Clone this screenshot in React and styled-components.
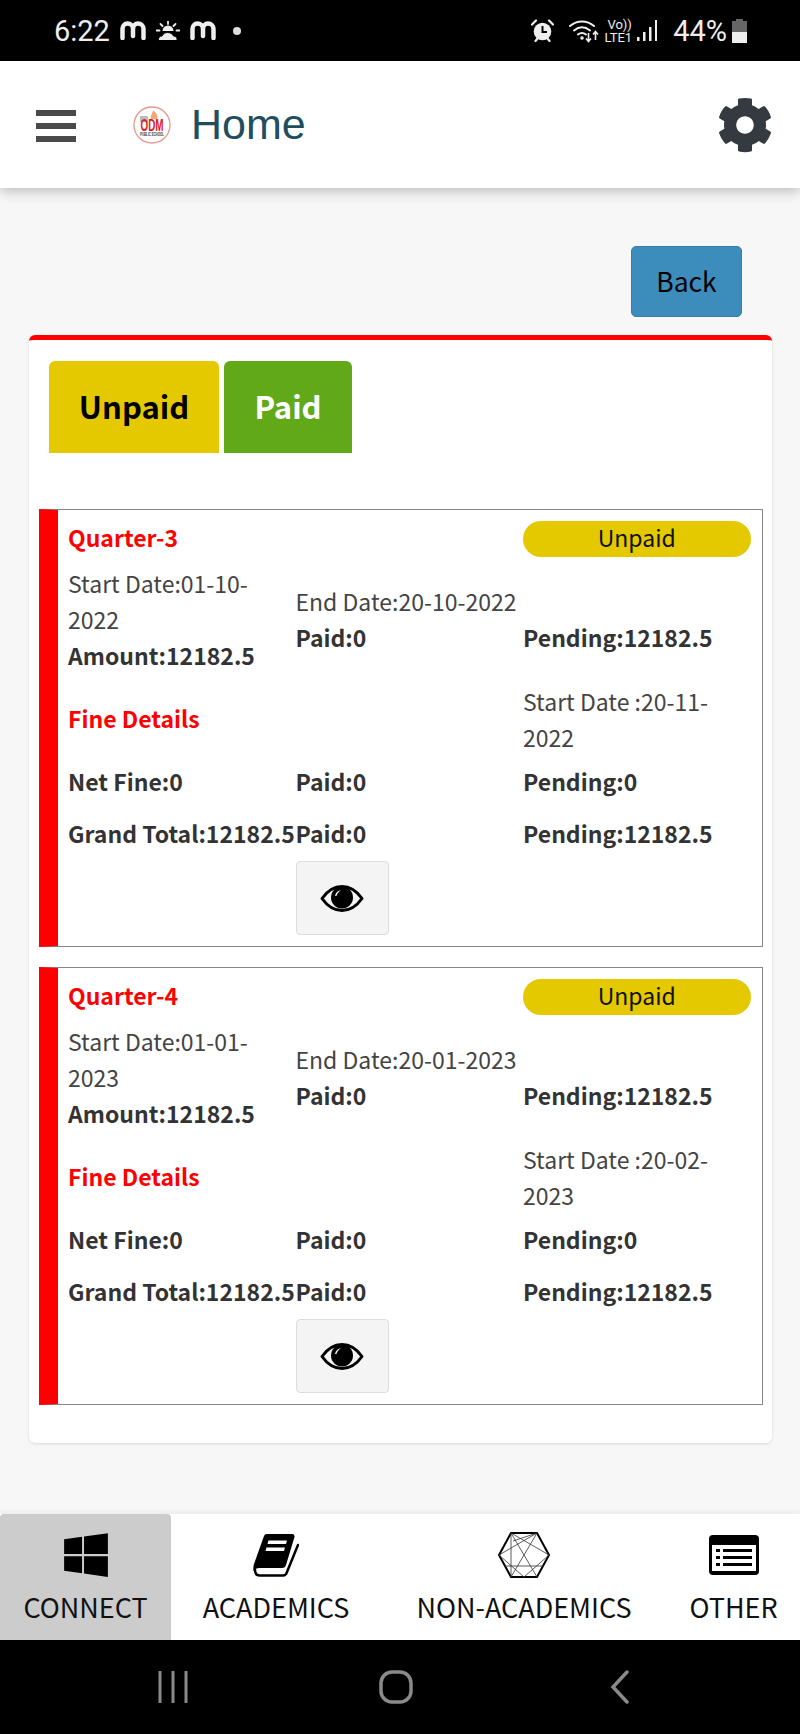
import React from 'react';
import styled, { createGlobalStyle } from 'styled-components';
import { FaCog, FaWindows } from 'react-icons/fa';

const GlobalStyle = createGlobalStyle`
  html, body {
    margin: 0;
    padding: 0;
    background: #f7f7f7;
    font-family: "Noto Sans CJK SC", "Noto Sans", sans-serif;
  }
  * { box-sizing: border-box; }
`;

const quarters = [
  {
    name: 'Quarter-3',
    start: '01-10-2022',
    end: '20-10-2022',
    fineStart: '20-11-2022',
  },
  {
    name: 'Quarter-4',
    start: '01-01-2023',
    end: '20-01-2023',
    fineStart: '20-02-2023',
  },
];

const MLogo = () => (
  <svg width="26" height="19" viewBox="0 0 26 19">
    <path
      d="M2.500 17V8c0-3 2-5.500 5-5.500S13 5 13 8v7M13 8c0-3 2-5.500 5-5.500S23.500 5 23.500 8v9"
      fill="none"
      stroke="#eee"
      strokeWidth="4.500"
      strokeLinecap="round"
    />
  </svg>
);

const SunCloud = () => (
  <svg width="24" height="20" viewBox="0 0 24 20">
    <path
      d="M12 .5v2.500M4.500 3l2 2M19.500 3l-2 2M.5 9.500h3M20.500 9.500h3"
      stroke="#eee"
      strokeWidth="1.800"
      strokeLinecap="round"
    />
    <path d="M6.500 10a5.500 5.500 0 0 1 11 0z" fill="#eee" />
    <path
      d="M2.500 19.500c-.5-2.500 1-4.500 3.500-4.500 1-2.500 3.500-3.500 5.500-3.500 3 0 5 1.500 6 3.500 2.500 0 4 2 3.500 4.500z"
      fill="#eee"
      stroke="#000"
      strokeWidth="1"
    />
  </svg>
);

const Alarm = () => (
  <svg width="23" height="24" viewBox="0 0 23 24">
    <circle cx="11.500" cy="12.500" r="8.800" fill="#eee" />
    <path d="M11.500 7v6h4.500" fill="none" stroke="#000" strokeWidth="2" />
    <path
      d="M1 5.500L5 1.500M22 5.500L18 1.500M4.500 22l2-2.500M18.500 22l-2-2.500"
      stroke="#eee"
      strokeWidth="2.200"
      strokeLinecap="round"
    />
  </svg>
);

const Wifi = () => (
  <svg width="30" height="24" viewBox="0 0 30 24">
    <path
      d="M1 7c7-6 17-6 24 0M5 11.500c5-4 11-4 16 0M9 15.500c2.500-1.800 5.500-1.800 8 0"
      fill="none"
      stroke="#eee"
      strokeWidth="2"
      strokeLinecap="round"
    />
    <circle cx="13" cy="19" r="1.800" fill="#eee" />
    <path
      d="M19.500 14v8M17 19.500l2.500 3 2.500-3M26.500 21v-8M24 15.500l2.500-3 2.500 3"
      fill="none"
      stroke="#eee"
      strokeWidth="1.600"
    />
  </svg>
);

const Signal = () => (
  <svg width="20" height="24" viewBox="0 0 20 24">
    <rect x="0" y="18" width="2.500" height="4" fill="#eee" />
    <rect x="6" y="13" width="2.500" height="9" fill="#eee" />
    <rect x="12" y="8" width="2.500" height="14" fill="#eee" />
    <rect x="18" y="1" width="2" height="21" fill="#eee" />
  </svg>
);

const Battery = () => (
  <svg width="15" height="24" viewBox="0 0 15 24">
    <rect x="4" y="0" width="7" height="3" fill="#666" />
    <rect x="0" y="2" width="15" height="11" fill="#666" />
    <rect x="0" y="13" width="15" height="11" fill="#eee" />
  </svg>
);

const Hamburger = () => (
  <svg width="40" height="33" viewBox="0 0 40 33">
    <rect y="0" width="40" height="6" fill="#4a4a4a" />
    <rect y="13" width="40" height="6" fill="#4a4a4a" />
    <rect y="26" width="40" height="6" fill="#4a4a4a" />
  </svg>
);

const Eye = () => (
  <svg width="44" height="27" viewBox="0 0 44 27">
    <path
      d="M2 13.500C8 5 14.500 1.500 22 1.500s14 3.500 20 12c-6 8.500-12.500 12-20 12S8 22 2 13.500z"
      fill="none"
      stroke="#000"
      strokeWidth="3"
      strokeLinejoin="round"
    />
    <circle cx="22" cy="12.500" r="11" fill="#000" />
    <path d="M15 11c.5-3.500 3-5.500 6-6-2 1.500-4 3.500-4.500 6z" fill="#f4f4f4" />
  </svg>
);

const Book = () => (
  <svg width="46" height="43" viewBox="0 0 46 43">
    <path
      d="M11 2Q11.500 0 14 0H39Q42 0 41.500 3L33 31Q32.300 34 29 34H6Q3 34 2 36L.5 37Q0 33 1 30Z"
      fill="#000"
    />
    <path
      d="M2 36Q2 41.500 7 41.500H30Q33 41.500 34 38L45 11"
      fill="none"
      stroke="#000"
      strokeWidth="2.500"
      strokeLinecap="round"
    />
    <path d="M15.500 6.500H34L33 10H14.500ZM13.500 13.500H32L31 17H12.500Z" fill="#fff" />
  </svg>
);

const Hexagon = () => (
  <svg width="52" height="46" viewBox="0 0 52 46">
    <path
      d="M13 1h26l12 22-12 22H13L1 23z"
      fill="none"
      stroke="#000"
      strokeWidth="2"
    />
    <path
      d="M13 1L39 45M39 1L13 45M13 1v44M13 1L51 23M1 23L39 1M15 9L39 1M6 34h40M51 23L26 45M1 23L26 45"
      fill="none"
      stroke="#333"
      strokeWidth="0.800"
    />
  </svg>
);

const ListBox = () => (
  <svg width="50" height="40" viewBox="0 0 50 40">
    <rect width="50" height="40" rx="4" fill="#000" />
    <rect x="3" y="10" width="44" height="26" fill="#fff" />
    <rect x="7" y="14" width="4" height="3" fill="#000" />
    <rect x="7" y="21" width="4" height="3" fill="#000" />
    <rect x="7" y="28" width="4" height="3" fill="#000" />
    <rect x="14" y="14" width="29" height="3" fill="#000" />
    <rect x="14" y="21" width="29" height="3" fill="#000" />
    <rect x="14" y="28" width="29" height="3" fill="#000" />
  </svg>
);

const LogoMark = () => (
  <svg width="38" height="38" viewBox="0 0 38 38">
    <circle cx="19" cy="19" r="18" fill="#fff" stroke="#e49a90" strokeWidth="1.300" />
    <rect x="7" y="10" width="8" height="6" fill="#bbb" />
    <path d="M20 4.500c3 2 5.500 4.500 4 8.500h-6c-1-3 1-5 2-8.500z" fill="#f0a878" />
    <text
      x="19"
      y="24.500"
      textAnchor="middle"
      fontFamily="Liberation Sans, sans-serif"
      fontSize="16"
      fontWeight="700"
      fill="#d8201f"
      textLength="23"
      lengthAdjust="spacingAndGlyphs"
    >
      ODM
    </text>
    <text
      x="19"
      y="29.500"
      textAnchor="middle"
      fontFamily="Liberation Sans, sans-serif"
      fontSize="4.500"
      fontWeight="700"
      fill="#333"
      textLength="24"
      lengthAdjust="spacingAndGlyphs"
    >
      PUBLIC SCHOOL
    </text>
  </svg>
);

const FeeItem = ({ quarter }) => (
  <Item>
    <Row>
      <Heading>{quarter.name}</Heading>
      <span />
      <Pill>Unpaid</Pill>
    </Row>
    <Row $top={9}>
      <Cell>
        <Line>Start Date:{quarter.start}</Line>
        <Line $bold>Amount:12182.5</Line>
      </Cell>
      <Cell>
        <Line>End Date:{quarter.end}</Line>
        <Line $bold>Paid:0</Line>
      </Cell>
      <Cell>
        <Line>&nbsp;</Line>
        <Line $bold>Pending:12182.5</Line>
      </Cell>
    </Row>
    <Row $top={10}>
      <Heading>Fine Details</Heading>
      <span />
      <Line>Start Date :{quarter.fineStart}</Line>
    </Row>
    <Row $top={8}>
      <Line $bold>Net Fine:0</Line>
      <Line $bold>Paid:0</Line>
      <Line $bold>Pending:0</Line>
    </Row>
    <Row $top={16}>
      <Line $bold>Grand Total:12182.5</Line>
      <Line $bold>Paid:0</Line>
      <Line $bold>Pending:12182.5</Line>
    </Row>
    <Row $top={9}>
      <span />
      <EyeButton>
        <Eye />
      </EyeButton>
    </Row>
  </Item>
);

const App = () => (
  <Page>
    <GlobalStyle />
    <StatusBar>
      <StatusGroup $gap={10}>
        <Clock>6:22</Clock>
        <MLogo />
        <SunCloud />
        <MLogo />
        <Dot />
      </StatusGroup>
      <StatusGroup $gap={5}>
        <Alarm />
        <Spacer $width={5} />
        <Wifi />
        <Carrier>
          <span>Vo))</span>
          <span>LTE1</span>
        </Carrier>
        <Signal />
        <Spacer $width={6} />
        <Clock>44%</Clock>
        <Battery />
      </StatusGroup>
    </StatusBar>

    <Header>
      <MenuButton>
        <Hamburger />
      </MenuButton>
      <Logo>
        <LogoMark />
      </Logo>
      <Title>Home</Title>
      <Settings>
        <FaCog size={56} color="#343a40" />
      </Settings>
    </Header>

    <Main>
      <BackRow>
        <BackButton>Back</BackButton>
      </BackRow>
      <Card>
        <Tabs>
          <Tab $bg="#e4c900" $color="#000" $width={170}>
            Unpaid
          </Tab>
          <Tab $bg="#62a91a" $color="#fff" $width={128}>
            Paid
          </Tab>
        </Tabs>
        <ItemList>
          {quarters.map(quarter => (
            <FeeItem key={quarter.name} quarter={quarter} />
          ))}
        </ItemList>
      </Card>
    </Main>

    <BottomNav>
      <NavItem $active>
        <NavIcon>
          <FaWindows size={50} color="#000" />
        </NavIcon>
        <NavLabel>CONNECT</NavLabel>
      </NavItem>
      <NavItem>
        <NavIcon>
          <Book />
        </NavIcon>
        <NavLabel>ACADEMICS</NavLabel>
      </NavItem>
      <NavItem>
        <NavIcon>
          <Hexagon />
        </NavIcon>
        <NavLabel>NON-ACADEMICS</NavLabel>
      </NavItem>
      <NavItem>
        <NavIcon>
          <ListBox />
        </NavIcon>
        <NavLabel>OTHER</NavLabel>
      </NavItem>
    </BottomNav>

    <SystemBar>
      <SystemIcon>
        <svg width="32" height="34" viewBox="0 0 32 34">
          <path d="M3 1v32M16 1v32M29 1v32" stroke="#8a8a8a" strokeWidth="3" />
        </svg>
      </SystemIcon>
      <SystemIcon>
        <svg width="34" height="34" viewBox="0 0 34 34">
          <rect x="2" y="2" width="30" height="30" rx="11" fill="none" stroke="#8a8a8a" strokeWidth="3.500" />
        </svg>
      </SystemIcon>
      <SystemIcon>
        <svg width="20" height="34" viewBox="0 0 20 34">
          <path d="M17 2L3 17l14 15" fill="none" stroke="#8a8a8a" strokeWidth="3.500" strokeLinecap="round" />
        </svg>
      </SystemIcon>
    </SystemBar>
  </Page>
);

export default App;

const Page = styled.div`
  width: 800px;
  height: 1734px;
  display: flex;
  flex-direction: column;
  overflow: hidden;
  background: #f7f7f7;
`;

const StatusBar = styled.div`
  height: 61px;
  flex: none;
  background: #000;
  padding: 0 53px 0 54px;
  display: flex;
  align-items: center;
  justify-content: space-between;
`;

const StatusGroup = styled.div`
  display: flex;
  align-items: center;
  gap: ${props => props.$gap}px;
`;

const Spacer = styled.span`
  width: ${props => props.$width}px;
`;

const Clock = styled.span`
  font-family: Roboto, sans-serif;
  font-size: 29px;
  color: #eee;
`;

const Dot = styled.span`
  width: 8px;
  height: 8px;
  margin-left: 7px;
  margin-right: 8px;
  border-radius: 50%;
  background: #ddd;
`;

const Carrier = styled.div`
  display: flex;
  flex-direction: column;
  font-family: Roboto, sans-serif;
  font-size: 13px;
  line-height: 13px;
  color: #eee;
  span:first-child {
    margin-left: 3px;
  }
`;

const Header = styled.header`
  height: 127px;
  flex: none;
  position: relative;
  background: #fff;
  box-shadow: 0 3px 12px rgba(0, 0, 0, 0.25);
  display: flex;
  align-items: center;
  padding: 0 27px 0 36px;
`;

const MenuButton = styled.div`
  display: flex;
  margin-right: 57px;
  margin-top: 4px;
`;

const Logo = styled.div`
  width: 38px;
  height: 38px;
  margin-right: 20px;
  display: flex;
`;

const Title = styled.h1`
  margin: 0;
  font-family: "Liberation Sans", sans-serif;
  font-size: 43px;
  font-weight: 400;
  color: #1f4e5f;
`;

const Settings = styled.div`
  margin-left: auto;
  display: flex;
`;

const Main = styled.main`
  flex: 1;
  padding: 58px 28px 0 29px;
`;

const BackRow = styled.div`
  display: flex;
  justify-content: flex-end;
  padding-right: 30px;
  margin-bottom: 18px;
`;

const BackButton = styled.button`
  width: 111px;
  height: 71px;
  padding: 0 0 3px;
  background: #3c8dbc;
  border: 1px solid #367fa9;
  border-radius: 5px;
  font-family: inherit;
  font-size: 26.500px;
  color: #000;
`;

const Card = styled.section`
  background: #fff;
  border-top: 5px solid #f00;
  border-radius: 6px;
  box-shadow: 0 1px 3px rgba(0, 0, 0, 0.12);
  padding: 21px 9px 38px 10px;
`;

const Tabs = styled.div`
  display: flex;
  gap: 5px;
  padding-left: 10px;
  margin-bottom: 56px;
`;

const Tab = styled.div`
  width: ${props => props.$width}px;
  height: 92px;
  padding-bottom: 3px;
  display: flex;
  align-items: center;
  justify-content: center;
  background: ${props => props.$bg};
  color: ${props => props.$color};
  border-radius: 6px 6px 0 0;
  font-size: 31px;
  font-weight: 700;
`;

const ItemList = styled.div`
  display: flex;
  flex-direction: column;
  gap: 20px;
`;

const Item = styled.article`
  height: 438px;
  border: 1px solid #888;
  border-left: 19px solid #f00;
  padding: 11px 10px 0 10px;
`;

const Row = styled.div`
  display: grid;
  grid-template-columns: repeat(3, 227.5px);
  align-items: center;
  margin-top: ${props => props.$top || 0}px;
`;

const Cell = styled.div`
  display: flex;
  flex-direction: column;
`;

const Line = styled.div`
  font-size: 23px;
  line-height: 36px;
  font-weight: ${props => (props.$bold ? 700 : 400)};
  color: ${props => (props.$bold ? '#333' : '#444')};
  white-space: ${props => (props.$bold ? 'nowrap' : 'normal')};
  transform: translateY(-1px);
`;

const Heading = styled.div`
  height: 36px;
  font-size: 23px;
  line-height: 33px;
  font-weight: 700;
  color: #f00;
`;

const Pill = styled.div`
  height: 36px;
  border-radius: 18px;
  background: #e4c900;
  color: #111;
  font-size: 23px;
  line-height: 33px;
  text-align: center;
`;

const EyeButton = styled.button`
  width: 93px;
  height: 74px;
  padding: 0;
  display: flex;
  align-items: center;
  justify-content: center;
  background: #f4f4f4;
  border: 1px solid #ddd;
  border-radius: 4px;
`;

const BottomNav = styled.nav`
  height: 126px;
  flex: none;
  background: #fff;
  box-shadow: 0 -2px 4px rgba(0, 0, 0, 0.05);
  display: grid;
  grid-template-columns: 171px 210px 286px 133px;
`;

const NavItem = styled.div`
  display: flex;
  flex-direction: column;
  align-items: center;
  padding-top: 18px;
  border-radius: 4px 4px 0 0;
  background: ${props => (props.$active ? '#ccc' : '#fff')};
`;

const NavIcon = styled.div`
  height: 46px;
  display: flex;
  align-items: center;
  justify-content: center;
`;

const NavLabel = styled.span`
  margin-top: 9px;
  font-size: 27px;
  line-height: 40px;
  color: #111;
  white-space: nowrap;
`;

const SystemBar = styled.div`
  height: 94px;
  flex: none;
  background: #000;
  display: grid;
  grid-template-columns: repeat(3, 223.5px);
  padding-left: 61px;
`;

const SystemIcon = styled.div`
  display: flex;
  align-items: center;
  justify-content: center;
`;
